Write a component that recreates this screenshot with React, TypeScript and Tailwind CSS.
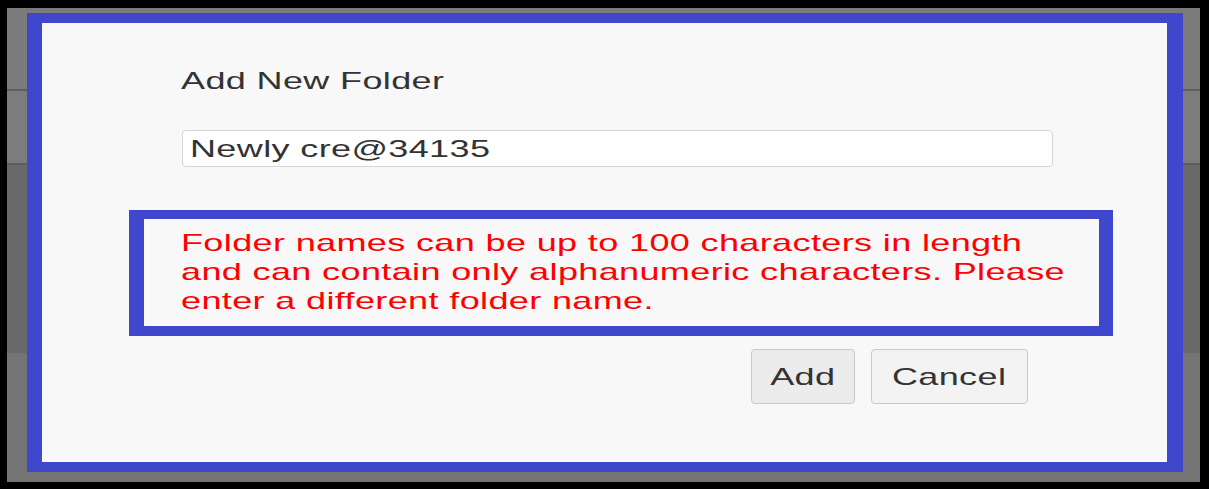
export default function App() {
  const font = { fontFamily: '"Liberation Sans", Arial, sans-serif' };

  return (
    <div className="h-[489px] w-[1209px] bg-black pl-[7px] pt-[8px]" style={font}>
      <div className="h-[474px] w-[1193px] bg-[linear-gradient(to_bottom,#7b7b7b_0px,#7b7b7b_81px,#5e5e5e_81px,#5e5e5e_83px,#7c7c7c_83px,#7c7c7c_155px,#5e5e5e_155px,#5e5e5e_157px,#696969_157px,#696969_345px,#747474_345px)] pl-[20px] pt-[5px]">
        <div className="flex h-[459px] w-[1156px] flex-col border-b-[10px] border-l-[15px] border-r-[16px] border-t-[10px] border-[#3f48cc] bg-[#f8f8f8]">
          {/* screenshot is stretched horizontally, hence the scale-x on text */}
          <h2 className="ml-[139px] mt-[44px] text-[24px] leading-[28px] text-[#333]">
            <span className="inline-block origin-left scale-x-150 tracking-[0.25px]">Add New Folder</span>
          </h2>

          <div className="ml-[140px] mt-[35px] flex h-[37px] w-[871px] items-center rounded-[4px] border border-[#d6d6d6] bg-white px-[7px] text-[24px] text-[#333]">
            <span className="inline-block origin-left scale-x-150 tracking-[0.25px]">Newly cre@34135</span>
          </div>

          <div className="ml-[87px] mt-[43px] w-[984px] border-b-[10px] border-l-[15px] border-r-[14px] border-t-[9px] border-[#3f48cc] pb-[11px] pl-[37px] pt-[9px]">
            <p className="w-[598px] origin-left scale-x-150 text-[24px] leading-[29px] tracking-[0.25px] text-[#ff0000]">
              Folder names can be up to 100 characters in length and can contain only alphanumeric characters. Please
              enter a different folder name.
            </p>
          </div>

          <div className="mr-[139px] mt-[13px] flex justify-end gap-[16px]">
            <button className="h-[55px] w-[104px] rounded-[4px] border border-[#c9c9c9] bg-[#ececec] text-[24px] text-[#333]">
              <span className="inline-block scale-x-150 tracking-[0.25px]">Add</span>
            </button>
            <button className="h-[55px] w-[157px] rounded-[4px] border border-[#c9c9c9] bg-[#f3f3f3] text-[24px] text-[#333]">
              <span className="inline-block scale-x-150 tracking-[0.25px]">Cancel</span>
            </button>
          </div>
        </div>
      </div>
    </div>
  );
}
